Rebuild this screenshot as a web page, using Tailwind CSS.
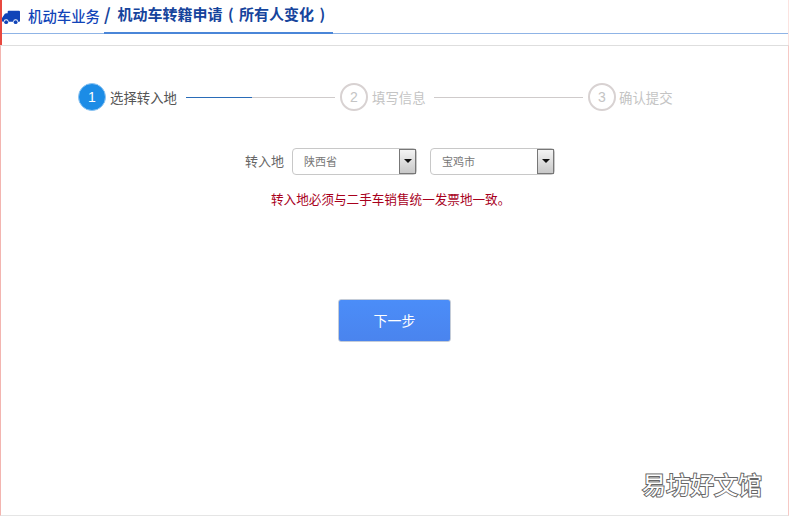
<!DOCTYPE html>
<html lang="en">
  <head>
    <meta charset="UTF-8" />
    <meta name="viewport" content="width=device-width, initial-scale=1.0" />
    <title>机动车转籍申请</title>
    <script src="https://cdn.jsdelivr.net/npm/@tailwindcss/browser@4"></script>
  </head>
  <body class="w-[789px] h-[516px] overflow-hidden bg-white font-['Noto_Sans_CJK_SC',sans-serif]">
    <div class="relative w-[789px] h-[516px] flex flex-col">
      <!-- header -->
      <div class="h-[45px] border-l-2 border-l-[#e8483f] border-r border-r-[#fbe3e0]">
        <div class="h-[34px] flex items-end border-b border-[#8fb4e6]">
          <div class="flex items-center h-[33px] gap-[8px]">
            <svg class="w-[18px] h-[15px] mt-[2px]" viewBox="0 0 19 15" fill="#1144b8">
              <path d="M0 8 L3 3.5 Q3.5 3 4.5 3 H6 V1.5 Q6 0.5 7 0.5 H18 Q19 0.5 19 1.5 V11.5 Q19 12 18 12 H17 A2.6 2.6 0 0 0 11.8 12 H7 A2.6 2.6 0 0 0 1.8 12 H1 Q0 12 0 11 Z" />
              <circle cx="4.4" cy="12.4" r="2" />
              <circle cx="14.4" cy="12.4" r="2" />
            </svg>
            <span class="w-[72px] text-[14.4px] font-medium text-[#1144b8] leading-none whitespace-nowrap">机动车业务</span>
          </div>
          <div class="ml-[4px] h-[34px] -mb-px w-[229px] border-b-2 border-[#4a86d8] flex items-center gap-[7px] pb-[5px] text-[15px] font-bold text-[#16449c] leading-none">
            <span class="text-[17px]">/</span><span class="whitespace-nowrap [word-spacing:2px]">机动车转籍申请 ( 所有人变化 )</span>
          </div>
        </div>
      </div>
      <!-- content panel -->
      <div class="flex-1 border-t border-[#dedede] border-b border-b-[#e5e5e5] border-r border-r-[#f6c9c5] border-l border-l-[#f3b5b0]">
        <!-- steps -->
        <div class="mt-[37px] ml-[77px] flex items-center h-[28px]">
          <div class="w-[28px] h-[28px] rounded-full bg-[#1c8ce6] border border-[#8cc4f2] text-white text-[14px] flex items-center justify-center font-['Liberation_Sans',sans-serif]">1</div>
          <span class="ml-[4px] w-[67px] text-[13.4px] text-[#555555] whitespace-nowrap">选择转入地</span>
          <div class="ml-[9px] w-[149px] h-px bg-[#cfcbcb] flex">
            <div class="w-[66px] h-px bg-[#2a6cb8]"></div>
          </div>
          <div class="ml-[5px] w-[28px] h-[28px] rounded-full border-2 border-[#d8d2d2] text-[#c4c4c4] text-[14px] flex items-center justify-center font-['Liberation_Sans',sans-serif]">2</div>
          <span class="ml-[4px] w-[53px] text-[13.4px] text-[#c4c4c4] whitespace-nowrap">填写信息</span>
          <div class="ml-[9px] w-[149px] h-px bg-[#cfcbcb]"></div>
          <div class="ml-[5px] w-[28px] h-[28px] rounded-full border-2 border-[#d8d2d2] text-[#c4c4c4] text-[14px] flex items-center justify-center font-['Liberation_Sans',sans-serif]">3</div>
          <span class="ml-[3px] text-[13.4px] text-[#c4c4c4] whitespace-nowrap">确认提交</span>
        </div>
        <!-- location -->
        <div class="mt-[36px] ml-[244px] flex items-center h-[28px]">
          <span class="text-[13px] text-[#666666] w-[47px] whitespace-nowrap">转入地</span>
          <div class="w-[125px] h-[27px] border border-[#c8c8c8] rounded-[4px] flex items-center justify-between">
            <span class="pl-[11px] text-[11px] text-[#777777]">陕西省</span>
            <div class="w-[17px] h-[25px] border border-[#777777] bg-gradient-to-b from-[#f4f4f4] to-[#c8c8c8] flex items-center justify-center">
              <svg class="w-[8px] h-[4px]" viewBox="0 0 8 4"><path d="M0 0 H8 L4 4 Z" fill="#111111" /></svg>
            </div>
          </div>
          <div class="ml-[13px] w-[125px] h-[27px] border border-[#c8c8c8] rounded-[4px] flex items-center justify-between">
            <span class="pl-[11px] text-[11px] text-[#777777]">宝鸡市</span>
            <div class="w-[17px] h-[25px] border border-[#777777] bg-gradient-to-b from-[#f4f4f4] to-[#c8c8c8] flex items-center justify-center">
              <svg class="w-[8px] h-[4px]" viewBox="0 0 8 4"><path d="M0 0 H8 L4 4 Z" fill="#111111" /></svg>
            </div>
          </div>
        </div>
        <p class="mt-[14px] ml-[270px] text-[12.6px] leading-[20px] text-[#a8001c] whitespace-nowrap">转入地必须与二手车销售统一发票地一致。</p>
        <!-- next -->
        <button class="block mt-[90px] ml-[337px] w-[113px] h-[43px] rounded-[3px] border border-[#c4ccd8] bg-gradient-to-b from-[#4b8df8] to-[#4a84ee] text-white text-[14px]">下一步</button>
      </div>
      <div class="absolute left-[642px] top-[466px] text-[24px] leading-[36px] text-white whitespace-nowrap [paint-order:stroke] [-webkit-text-stroke:2px_#666666]">易坊好文馆</div>
    </div>
  </body>
</html>
